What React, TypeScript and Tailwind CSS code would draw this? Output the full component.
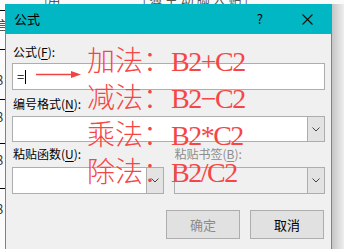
import React from 'react';

const ui = { fontFamily: '"Noto Sans CJK SC", "Noto Sans", sans-serif' };
const redFont = { fontFamily: '"Liberation Serif", "Noto Sans CJK SC", serif' };

const Label = ({ text, k, dim }: { text: string; k: string; dim?: boolean }) => (
  <div className={`h-4 text-[12px] leading-4 ml-px ${dim ? 'text-[#8c8c8c]' : 'text-black'}`}>
    {text}(<span className="underline underline-offset-2">{k}</span>):
  </div>
);

const SelectBox = ({ h, disabled }: { h: string; disabled?: boolean }) => (
  <div className={`flex ${h} border border-[#adadad] ${disabled ? 'bg-[#f0f0f0]' : 'bg-white'}`}>
    <div className="flex-1" />
    <div className="w-[17px] flex items-center justify-center bg-[#e3e3e3] border-l border-[#adadad]">
      <svg width="8" height="5" viewBox="0 0 8 5">
        <path d="M0.5 0.5 L4 4 L7.5 0.5" fill="none" stroke="#444" strokeWidth="1" />
      </svg>
    </div>
  </div>
);

export default function App() {
  const lines = ['加法：', '减法：', '乘法：', '除法：'];
  const formulas = ['B2+C2', 'B2\u2212C2', 'B2*C2', 'B2/C2'];
  return (
    <div className="relative w-[344px] h-[249px] overflow-hidden bg-[#f4f4f4]" style={ui}>
      {/* document strip behind the dialog */}
      <div className="h-[4px] overflow-hidden bg-[#fafafa]">
        <div className="flex gap-3 -mt-[11px] pl-[44px] text-[13px] text-[#555] whitespace-nowrap">
          <span>|用</span>
          <span className="ml-[70px]">| 簿 主 动 脚 入 贴 |</span>
        </div>
      </div>
      <div className="flex">
        {/* left edge of the sheet */}
        <div className="w-[5px] h-[245px] bg-[#fbfbfb] flex flex-col overflow-hidden text-[13px] leading-4 text-[#333]">
          <div className="h-[6px]" />
          <div className="h-px bg-black" />
          <div className="h-[6px]" />
          <div className="-ml-[4px]">言</div>
          <div className="h-[16px]" />
          <div className="h-px bg-black" />
          <div className="h-[22px]" />
          <div className="-ml-[4px]">8</div>
          <div className="h-[11px]" />
          <div className="h-px bg-black" />
          <div className="h-[9px]" />
          <div className="-ml-[4px]">8</div>
          <div className="h-[18px]" />
          <div className="h-px bg-black" />
          <div className="h-[8px]" />
          <div className="-ml-[4px]">8</div>
          <div className="h-[20px]" />
          <div className="h-px bg-black" />
          <div className="h-[12px]" />
          <div className="-ml-[4px]">8</div>
        </div>

        {/* dialog */}
        <div className="w-[327px] h-[245px] border-x border-[#00b7c3] bg-[#f0f0f0] flex flex-col">
          <div className="h-[30px] bg-[#00b7c3] flex items-center pl-[8px] text-[13px] text-black">
            <span>公式</span>
            <span className="ml-auto text-[13px] mr-[39px]">?</span>
            <svg width="11" height="11" viewBox="0 0 11 11" className="mr-[18px]">
              <path d="M0.5 0.5 L10.5 10.5 M10.5 0.5 L0.5 10.5" stroke="#111" strokeWidth="1.1" />
            </svg>
          </div>

          <div className="flex flex-col px-[6px] pt-[10px]">
            <Label text="公式" k="F" />
            <div className="mt-[3px] h-[27px] border border-[#adadad] bg-white flex items-center pl-[4px] text-[13px]">
              <span>=</span>
              <span className="ml-[1px] w-px h-[14px] bg-black" />
            </div>

            <div className="mt-[6px]">
              <Label text="编号格式" k="N" />
            </div>
            <div className="mt-[4px]">
              <SelectBox h="h-[26px]" />
            </div>

            <div className="mt-[4px] grid grid-cols-2 gap-[10px]">
              <Label text="粘贴函数" k="U" />
              <Label text="粘贴书签" k="B" dim />
            </div>
            <div className="mt-[5px] grid grid-cols-2 gap-[10px]">
              <SelectBox h="h-[27px]" />
              <SelectBox h="h-[27px]" disabled />
            </div>

            <div className="mt-[16px] flex justify-end gap-[10px] pr-px">
              <button className="w-[74px] h-[29px] border border-[#adadad] bg-[#e1e1e1] text-[13px] text-[#8a8a8a]">
                确定
              </button>
              <button className="w-[74px] h-[29px] border border-[#adadad] bg-[#e1e1e1] text-[13px] text-black">
                取消
              </button>
            </div>
          </div>
        </div>

        {/* window shadow */}
        <div className="w-[12px] h-[245px] bg-gradient-to-r from-[#c6c6c6] to-[#eeeeee]" />
      </div>

      {/* red annotation drawn over the dialog */}
      <svg className="absolute left-[36px] top-[70px]" width="46" height="9" viewBox="0 0 46 9">
        <path d="M0 4.5 H37" stroke="#f24343" strokeWidth="1.6" />
        <path d="M35 1 L45 4.5 L35 8 Z" fill="#f24343" />
      </svg>
      <div className="absolute left-[87px] top-[43px] flex flex-col text-[#f54646]">
        {lines.map((l, i) => (
          <div key={l} className="h-[37px] flex items-center whitespace-nowrap text-[28px] leading-[37px] font-light" style={redFont}>
            <span>{l}</span>
            <span className="tracking-[-1.5px]">{formulas[i]}</span>
          </div>
        ))}
      </div>
    </div>
  );
}
